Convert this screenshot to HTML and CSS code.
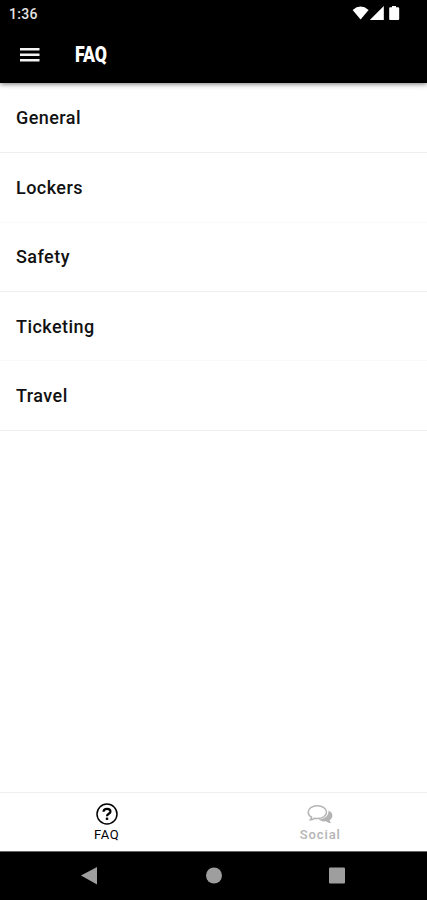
FILE: index.html
```html
<!DOCTYPE html>
<html lang="en">
<head>
<meta charset="utf-8">
<title>FAQ</title>
<link rel="stylesheet" href="styles.css">
</head>
<body>
<div class="screen">
  <header class="top">
    <div class="status">
      <span class="time">1:36</span>
      <svg class="status-icons" width="50" height="16" viewBox="0 0 50 16" fill="#fff">
        <path d="M-.4 4Q7.600 -2.800 15.600 4L7.600 13.500Z"/>
        <path d="M16.800 14L30.800 0V14Z"/>
        <path d="M37 1.200h2V-.1h4v1.300h2.200q1 0 1 1V13q0 1-1 1H37q-.8 0-.8-1V2.200q0-1 .8-1z"/>
      </svg>
    </div>
    <div class="bar">
      <svg class="menu" width="20" height="16" viewBox="0 0 20 16" fill="#f4f4f4">
        <path d="M0 1h19.500v2.600H0zM0 6.500h19.500v2.600H0zM0 12h19.500v2.600H0z"/>
      </svg>
      <h1 class="title">FAQ</h1>
    </div>
  </header>
  <main class="list">
    <div class="row">General</div>
    <div class="row faint">Lockers</div>
    <div class="row">Safety</div>
    <div class="row faint">Ticketing</div>
    <div class="row">Travel</div>
  </main>
  <nav class="tabs">
    <div class="tab active">
      <svg width="24" height="24" viewBox="0 0 24 24" fill="none" stroke="currentColor">
        <circle cx="12" cy="12" r="10" stroke-width="1.500"/>
        <path d="M8.500 9.700C8.600 7.700 10 6.800 12 6.800c2 0 3.500 1 3.500 2.700 0 2.300-3.500 2.200-3.500 4.700" stroke-width="2.200"/>
        <path d="M12 15.600v2.300" stroke-width="2.400"/>
      </svg>
      <span class="label">FAQ</span>
    </div>
    <div class="tab">
      <svg width="26" height="24" viewBox="0 0 26 24" fill="none" stroke="currentColor" stroke-width="1.500">
        <path d="M10.300 3.700c5.200 0 9.200 2.900 9.200 6.500s-4 6.400-9.200 6.400c-1 0-2-.1-2.900-.3-1.300.9-2.600 1.400-4.100 1.500.7-.8 1.200-1.600 1.300-2.600C2.500 14 1.200 12.200 1.200 10.200c0-3.600 3.900-6.500 9.100-6.500z"/>
        <path d="M21.500 8.500c2.500 1.100 3.900 2.900 3.900 5 0 1.900-1.100 3.600-2.700 4.700.2 1.300.7 2.200 1.500 3.100-2 0-3.700-.8-5.200-2-3 .4-5.700-.3-7.600-1.700 5.700-.2 10.500-3.800 10.100-9.100z" fill="currentColor" stroke="none"/>
      </svg>
      <span class="label social">Social</span>
    </div>
  </nav>
  <footer class="system">
    <svg width="427" height="48" viewBox="0 0 427 48" fill="#9e9e9e">
      <path d="M81 23.500L97 15v17.500z"/>
      <circle cx="214" cy="23.500" r="8"/>
      <rect x="329" y="15.500" width="16" height="16" rx="1"/>
    </svg>
  </footer>
</div>
</body>
</html>
```
FILE: styles.css
```css
* { box-sizing: border-box; }
body { margin: 0; background: #fff; font-family: Roboto, "Liberation Sans", sans-serif; }
.screen { width: 427px; height: 900px; display: flex; flex-direction: column; overflow: hidden; }
.top { height: 83px; flex: none; background: #000; color: #fff; box-shadow: 0 1px 5px rgba(0, 0, 0, .55); }
.status { height: 28px; display: flex; justify-content: space-between; padding: 6px 24px 0 9px; }
.time { font-size: 14px; line-height: 16px; font-weight: 500; letter-spacing: .3px; color: #e4e4e4; }
.status-icons { display: block; overflow: visible; }
.bar { height: 53px; display: flex; align-items: center; padding-left: 20px; gap: 35px; }
.menu { display: block; }
.title { margin: 0; font-size: 21.500px; line-height: 28px; font-weight: 900; transform: scaleX(.82); transform-origin: left; }
.list { flex: 1; padding-top: .8px; }
.row { height: 69.400px; display: flex; align-items: center; padding-left: 16px; border-bottom: 1px solid #efefef; font-size: 18px; font-weight: 500; letter-spacing: .45px; color: #111; }
.row.faint { border-bottom-color: #f9f9f9; }
.tabs { height: 59px; flex: none; display: flex; border-top: 1px solid #f0f0f0; }
.tab { flex: 1; display: flex; flex-direction: column; align-items: center; padding-top: 9px; color: #b4b4b4; }
.tab svg { display: block; }
.tab.active { color: #000; }
.label { font-size: 13px; line-height: 18px; letter-spacing: .6px; }
.social { letter-spacing: .9px; font-weight: 500; }
.system { height: 49px; flex: none; background: #000; border-top: 1px solid #666; }
.system svg { display: block; }
```
